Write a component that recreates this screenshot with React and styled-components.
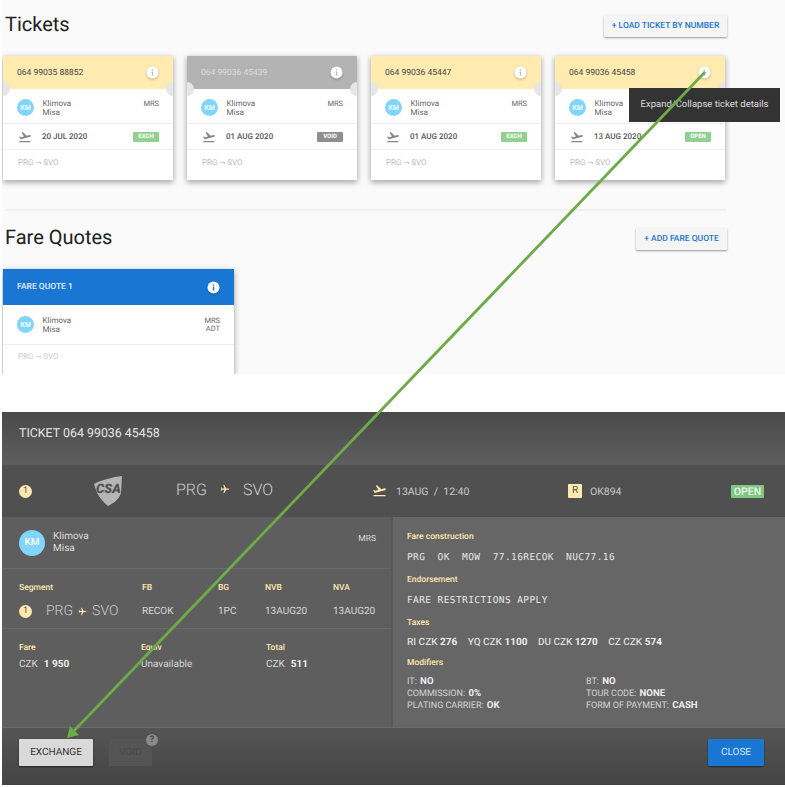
import React from 'react'
import styled, { createGlobalStyle } from 'styled-components'
import { MdFlightTakeoff, MdAirplanemodeActive } from 'react-icons/md'

const GlobalStyle = createGlobalStyle`
  html, body { margin: 0; padding: 0; background: #fff; }
  body {
    font-family: Roboto, "Liberation Sans", sans-serif;
    text-rendering: geometricPrecision;
  }
`

const Page = styled.div`
  position: relative;
  width: 785px;
  height: 787px;
  padding-left: 2px;
  box-sizing: border-box;
  overflow: hidden;
`

const Listing = styled.section`
  height: 374px;
  background: #fafafa;
  overflow: hidden;
  padding: 0 58px 0 1px;
`

const HeadRow = styled.div`
  display: flex;
  align-items: center;
  justify-content: space-between;
  height: 22px;
  margin-top: ${p => p.$top}px;
  padding-left: 2px;
`

const Title = styled.h2`
  margin: -5px 0 0;
  font-size: 20px;
  font-weight: 400;
  color: #212121;
`

const OutlineButton = styled.button`
  height: 22px;
  width: ${p => p.$width}px;
  padding: 0;
  border: 0;
  border-radius: 1px;
  background: #f5f5f5;
  box-shadow: 0 1px 2px rgba(0, 0, 0, 0.4);
  color: #1976d2;
  font: 500 8.5px Roboto, sans-serif;
  text-rendering: geometricPrecision;
  white-space: nowrap;
`

const CardRow = styled.div`
  display: flex;
  gap: 14px;
  margin-top: 19px;
`

const Card = styled.article`
  width: ${p => p.$width}px;
  background: #fff;
  box-shadow: 0 2px 6px rgba(0, 0, 0, 0.38);
`

const CardHeader = styled.header`
  position: relative;
  display: flex;
  align-items: center;
  justify-content: space-between;
  height: ${p => p.$height}px;
  padding: 0 14px;
  box-sizing: border-box;
  background: ${p => p.$bg};
  color: ${p => p.$color};
  font-size: 8.5px;
  font-weight: ${p => p.$weight || 400};
`

const Notch = styled.span`
  position: absolute;
  top: 26px;
  ${p => p.$side}: 0;
  width: 7px;
  height: 14px;
  border-radius: ${p => (p.$side === 'left' ? '0 7px 7px 0' : '7px 0 0 7px')};
  background: #e6e6e6;
`

const InfoDot = styled.svg`
  display: block;
  width: 13px;
  height: 13px;
  filter: drop-shadow(0 1px 1px rgba(0, 0, 0, 0.25));
`

const PersonRow = styled.div`
  display: flex;
  align-items: center;
  gap: 8.5px;
  height: ${p => p.$height}px;
  padding: ${p => p.$top}px 14px 0;
  box-sizing: border-box;
  border-bottom: 1px solid #eee;
`

const Avatar = styled.span`
  display: flex;
  flex: none;
  align-items: center;
  justify-content: center;
  width: ${p => p.$size}px;
  height: ${p => p.$size}px;
  border-radius: 50%;
  background: #81d4fa;
  color: #fff;
  font-size: ${p => p.$font}px;
  font-weight: 500;
`

const Name = styled.div`
  flex: 1;
  font-size: 8px;
  line-height: 9px;
  color: #666;
`

const Honorific = styled.div`
  margin-top: ${p => p.$top}px;
  font-size: 7.5px;
  line-height: 8.5px;
  color: #666;
  text-align: right;
`

const DateRow = styled.div`
  display: flex;
  align-items: center;
  height: 25px;
  padding: 0 14px;
  border-bottom: 1px solid #eee;
  color: #555;
  font-size: 8px;
  font-weight: 500;
`

const TakeoffSlot = styled.span`
  display: flex;
  width: 25px;
  padding-left: 1px;
  box-sizing: border-box;
  color: #858585;
  font-size: 14px;
`

const Status = styled.span`
  margin-left: auto;
  width: 26px;
  height: 10px;
  border-radius: 1px;
  background: ${p => p.$bg};
  color: #fff;
  font-size: 6px;
  font-weight: 700;
  line-height: 10px;
  text-align: center;
`

const Route = styled.div`
  height: ${p => p.$height}px;
  padding: ${p => p.$top}px 15px 0;
  box-sizing: border-box;
  color: ${p => p.$color};
  font-size: 8px;
  span { font-family: "DejaVu Sans", sans-serif; font-size: 7px; }
`

const Rule = styled.hr`
  height: 2px;
  margin: 29px 0 0 2px;
  border: 0;
  background: #f0f0f0;
`

const Dialog = styled.section`
  margin-top: 38px;
  height: 373px;
  display: flex;
  flex-direction: column;
  color: #ddd;
`

const DialogTitle = styled.div`
  height: 53px;
  padding: 15px 17px 0;
  box-sizing: border-box;
  background: linear-gradient(#4a4a4a, #5e5e5e);
  color: #e6e6e6;
  font-size: 12.4px;
  line-height: 14px;
`

const SegmentBar = styled.div`
  display: grid;
  grid-template-columns: 74px 83px 196px 196px 163px 33px;
  align-items: center;
  height: 52px;
  padding-left: 17px;
  background: #505050;
  color: #cfcfcf;
`

const NumberBadge = styled.span`
  display: flex;
  align-items: center;
  justify-content: center;
  width: 13px;
  height: 13px;
  border-radius: 50%;
  background: #ffe9ae;
  color: #555;
  font-size: 9px;
`

const Airports = styled.div`
  display: flex;
  align-items: center;
  gap: ${p => p.$gap}px;
  margin-top: ${p => p.$top || 0}px;
  font-size: ${p => p.$size}px;
  font-weight: 300;
  color: #ccc;
  svg { color: #ffe9ae; transform: rotate(90deg); font-size: ${p => p.$plane}px; }
`

const DepartCell = styled.div`
  display: flex;
  align-items: center;
  gap: 9px;
  font-size: 10.5px;
  color: #c8c8c8;
  svg { color: #ffe9ae; font-size: 15px; margin-top: -2px; }
`

const FlightCell = styled.div`
  display: flex;
  align-items: center;
  gap: 8px;
  font-size: 10.5px;
  color: #c8c8c8;
`

const ClassBox = styled.span`
  width: 14px;
  height: 14px;
  border-radius: 1px;
  background: #ffe9ae;
  color: #555;
  font-size: 10px;
  line-height: 14px;
  text-align: center;
`

const OpenTag = styled.span`
  height: 13px;
  border-radius: 1px;
  background: #81c784;
  color: #e9f6e9;
  font-size: 10.5px;
  font-weight: 500;
  line-height: 13px;
  text-align: center;
`

const Panels = styled.div`
  display: flex;
  height: 210px;
  background: #585858;
`

const LeftPanel = styled.div`
  width: 389px;
  background: #5e5e5e;
`

const RightPanel = styled.div`
  flex: 1;
  margin-left: 2px;
  padding: 15px 14px 0;
  background: #666;
`

const DialogPerson = styled.div`
  display: flex;
  align-items: center;
  gap: 8px;
  height: 51px;
  padding: 0 15px 0 17px;
  border-bottom: 1px solid #696969;
  font-size: 10px;
  line-height: 11.5px;
  color: #ddd;
`

const PersonName = styled.div`
  flex: 1;
`

const DialogHonorific = styled(Honorific)`
  color: #ddd;
  font-size: 8.5px;
`

const DetailGrid = styled.div`
  display: grid;
  grid-template-columns: ${p => p.$cols};
  padding: ${p => p.$pad};
  height: ${p => p.$height}px;
  box-sizing: border-box;
  border-bottom: ${p => (p.$line ? '1px solid #696969' : '0')};
  align-content: start;
`

const Label = styled.div`
  font-size: 8.5px;
  font-weight: 500;
  line-height: 10px;
  color: #ffe9ae;
`

const Value = styled.div`
  display: flex;
  align-items: center;
  gap: 4px;
  height: ${p => p.$height}px;
  font-size: 10px;
  color: #d8d8d8;
  b { font-weight: 700; color: #eee; margin-left: 2px; }
`

const SegmentValue = styled(Value)`
  gap: 14px;
`

const Mono = styled.div`
  margin: 10px 0 11px;
  font-family: "DejaVu Sans Mono", "Liberation Mono", monospace;
  font-size: 9.5px;
  line-height: 12px;
  letter-spacing: 0.4px;
  white-space: pre;
  color: #e6e6e6;
`

const Taxes = styled.div`
  display: flex;
  gap: 10.5px;
  margin: 9px 0 9px;
  font-size: 10px;
  line-height: 12px;
  font-weight: 500;
  color: #ddd;
  b { font-weight: 700; color: #eee; }
`

const Modifiers = styled.div`
  display: grid;
  grid-template-columns: 179px 1fr;
  margin-top: 8px;
  font-size: 9px;
  line-height: 12px;
  color: #d4d4d4;
  b { font-size: 9.6px; font-weight: 700; color: #eee; margin-left: 1px; }
`

const Footer = styled.footer`
  display: flex;
  align-items: flex-start;
  gap: 16px;
  flex: 1;
  padding: 11px 21px 0 17px;
  border-top: 1px solid #6a6a6a;
  background: linear-gradient(#555, #444);
`

const ActionButton = styled.button`
  position: relative;
  height: 27px;
  width: ${p => p.$width}px;
  margin-left: ${p => (p.$push ? 'auto' : 0)};
  padding: 0;
  border: 0;
  border-radius: 1px;
  background: ${p => p.$bg};
  box-shadow: ${p => (p.$flat ? 'none' : '0 1px 2px rgba(0, 0, 0, 0.5)')};
  color: ${p => p.$color};
  font: 400 10px Roboto, sans-serif;
  text-rendering: geometricPrecision;
`

const HelpDot = styled.span`
  position: absolute;
  top: -5px;
  right: -6px;
  width: 12px;
  height: 12px;
  border-radius: 50%;
  background: #8a8a8a;
  color: #444;
  font-size: 9px;
  font-weight: 700;
  line-height: 12px;
  text-align: center;
`

const Tooltip = styled.div`
  position: absolute;
  left: 629px;
  top: 88px;
  width: 151px;
  height: 34px;
  background: #333;
  color: #ddd;
  font-size: 9.5px;
  line-height: 34px;
  text-align: center;
  white-space: nowrap;
`

const ArrowLayer = styled.svg`
  position: absolute;
  left: 0;
  top: 0;
  pointer-events: none;
`

const tickets = [
  { number: '064 99035 88852', date: '20 JUL 2020', status: 'EXCH' },
  { number: '064 99036 45439', date: '01 AUG 2020', status: 'VOID', voided: true },
  { number: '064 99036 45447', date: '01 AUG 2020', status: 'EXCH' },
  { number: '064 99036 45458', date: '13 AUG 2020', status: 'OPEN' },
]

const Info = ({ color }) => (
  <InfoDot viewBox="0 0 13 13">
    <circle cx="6.5" cy="6.5" r="6" fill="#fff" />
    <rect x="5.8" y="5.6" width="1.4" height="4" fill={color} />
    <rect x="5.8" y="3.4" width="1.4" height="1.3" fill={color} />
  </InfoDot>
)

const Logo = () => (
  <svg width="31" height="31" viewBox="0 0 31 31">
    <path d="M1 8 C8 4 20 1 29 0 L28 17 C26 23 21 27 15 30 C10 26 5 20 3 14 Z" fill="#b5b5b5" />
    <text x="3" y="17" fontFamily="Roboto, sans-serif" fontSize="13" fontWeight="900" fontStyle="italic" fill="#505050">CSA</text>
  </svg>
)

const TicketCard = ({ number, date, status, voided }) => (
  <Card $width={170}>
    <CardHeader $height={33} $bg={voided ? '#b3b3b3' : '#ffeab0'} $color={voided ? '#dcdcdc' : '#444'}>
      {number}
      <Info color="#bbb" />
      <Notch $side="left" />
      <Notch $side="right" />
    </CardHeader>
    <PersonRow $height={35} $top={3}>
      <Avatar $size={17} $font={7}>KM</Avatar>
      <Name>Klimova<br />Misa</Name>
      <Honorific $top={-7}>MRS</Honorific>
    </PersonRow>
    <DateRow>
      <TakeoffSlot><MdFlightTakeoff /></TakeoffSlot>
      {date}
      <Status $bg={voided ? '#8f8f8f' : '#90d090'}>{status}</Status>
    </DateRow>
    <Route $height={30} $top={8} $color="#bbb">PRG <span>→</span> SVO</Route>
  </Card>
)

export default function App() {
  return (
    <Page>
      <GlobalStyle />
      <Listing>
        <HeadRow $top={15}>
          <Title>Tickets</Title>
          <OutlineButton $width={123}>+ LOAD TICKET BY NUMBER</OutlineButton>
        </HeadRow>
        <CardRow>
          {tickets.map(t => <TicketCard key={t.number} {...t} />)}
        </CardRow>
        <Rule />
        <HeadRow $top={17}>
          <Title>Fare Quotes</Title>
          <OutlineButton $width={91}>+ ADD FARE QUOTE</OutlineButton>
        </HeadRow>
        <CardRow>
          <Card $width={231}>
            <CardHeader $height={36} $bg="#1976d2" $color="#e3eefa" $weight={500}>
              FARE QUOTE 1
              <Info color="#1976d2" />
            </CardHeader>
            <PersonRow $height={40} $top={0}>
              <Avatar $size={17} $font={7}>KM</Avatar>
              <Name>Klimova<br />Misa</Name>
              <Honorific $top={1}>MRS<br />ADT</Honorific>
            </PersonRow>
            <Route $height={40} $top={7} $color="#ccc">PRG <span>→</span> SVO</Route>
          </Card>
        </CardRow>
      </Listing>

      <Dialog>
        <DialogTitle>TICKET 064 99036 45458</DialogTitle>
        <SegmentBar>
          <NumberBadge>1</NumberBadge>
          <Logo />
          <Airports $size={16} $gap={13} $plane={10} $top={-4}>PRG <MdAirplanemodeActive /> SVO</Airports>
          <DepartCell><MdFlightTakeoff />13AUG&nbsp; /&nbsp; 12:40</DepartCell>
          <FlightCell><ClassBox>R</ClassBox>OK894</FlightCell>
          <OpenTag>OPEN</OpenTag>
        </SegmentBar>
        <Panels>
          <LeftPanel>
            <DialogPerson>
              <Avatar $size={26} $font={10}>KM</Avatar>
              <PersonName>Klimova<br />Misa</PersonName>
              <DialogHonorific $top={-6}>MRS</DialogHonorific>
            </DialogPerson>
            <DetailGrid $cols="123px 76px 47px 68px 1fr" $pad="14px 0 0 17px" $height={60} $line>
              <Label>Segment</Label>
              <Label>FB</Label>
              <Label>BG</Label>
              <Label>NVB</Label>
              <Label>NVA</Label>
              <SegmentValue $height={36}>
                <NumberBadge>1</NumberBadge>
                <Airports $size={14} $gap={5} $plane={9}>PRG <MdAirplanemodeActive /> SVO</Airports>
              </SegmentValue>
              <Value $height={36}>RECOK</Value>
              <Value $height={36}>1PC</Value>
              <Value $height={36}>13AUG20</Value>
              <Value $height={36}>13AUG20</Value>
            </DetailGrid>
            <DetailGrid $cols="122px 125px 1fr" $pad="14px 0 0 17px" $height={98}>
              <Label>Fare</Label>
              <Label>Equiv</Label>
              <Label>Total</Label>
              <Value $height={22}>CZK <b>1 950</b></Value>
              <Value $height={22}>Unavailable</Value>
              <Value $height={22}>CZK <b>511</b></Value>
            </DetailGrid>
          </LeftPanel>
          <RightPanel>
            <Label>Fare construction</Label>
            <Mono>PRG  OK  MOW  77.16RECOK  NUC77.16</Mono>
            <Label>Endorsement</Label>
            <Mono>FARE RESTRICTIONS APPLY</Mono>
            <Label>Taxes</Label>
            <Taxes>
              <span>RI CZK <b>276</b></span>
              <span>YQ CZK <b>1100</b></span>
              <span>DU CZK <b>1270</b></span>
              <span>CZ CZK <b>574</b></span>
            </Taxes>
            <Label>Modifiers</Label>
            <Modifiers>
              <div>IT: <b>NO</b></div>
              <div>BT: <b>NO</b></div>
              <div>COMMISSION: <b>0%</b></div>
              <div>TOUR CODE: <b>NONE</b></div>
              <div>PLATING CARRIER: <b>OK</b></div>
              <div>FORM OF PAYMENT: <b>CASH</b></div>
            </Modifiers>
          </RightPanel>
        </Panels>
        <Footer>
          <ActionButton $width={74} $bg="#d9d9d9" $color="#333">EXCHANGE</ActionButton>
          <ActionButton $width={43} $bg="#555" $color="#484848" $flat>
            VOID
            <HelpDot>?</HelpDot>
          </ActionButton>
          <ActionButton $width={56} $bg="#1976d2" $color="#d5e6f8" $push>CLOSE</ActionButton>
        </Footer>
      </Dialog>

      <Tooltip>Expand/Collapse ticket details</Tooltip>

      <ArrowLayer width="785" height="787" viewBox="0 0 785 787">
        <line x1="705" y1="72" x2="72" y2="733" stroke="#6cab48" strokeWidth="2.8" />
        <polygon points="67,738 70,726 79,735" fill="#6cab48" />
      </ArrowLayer>
    </Page>
  )
}
